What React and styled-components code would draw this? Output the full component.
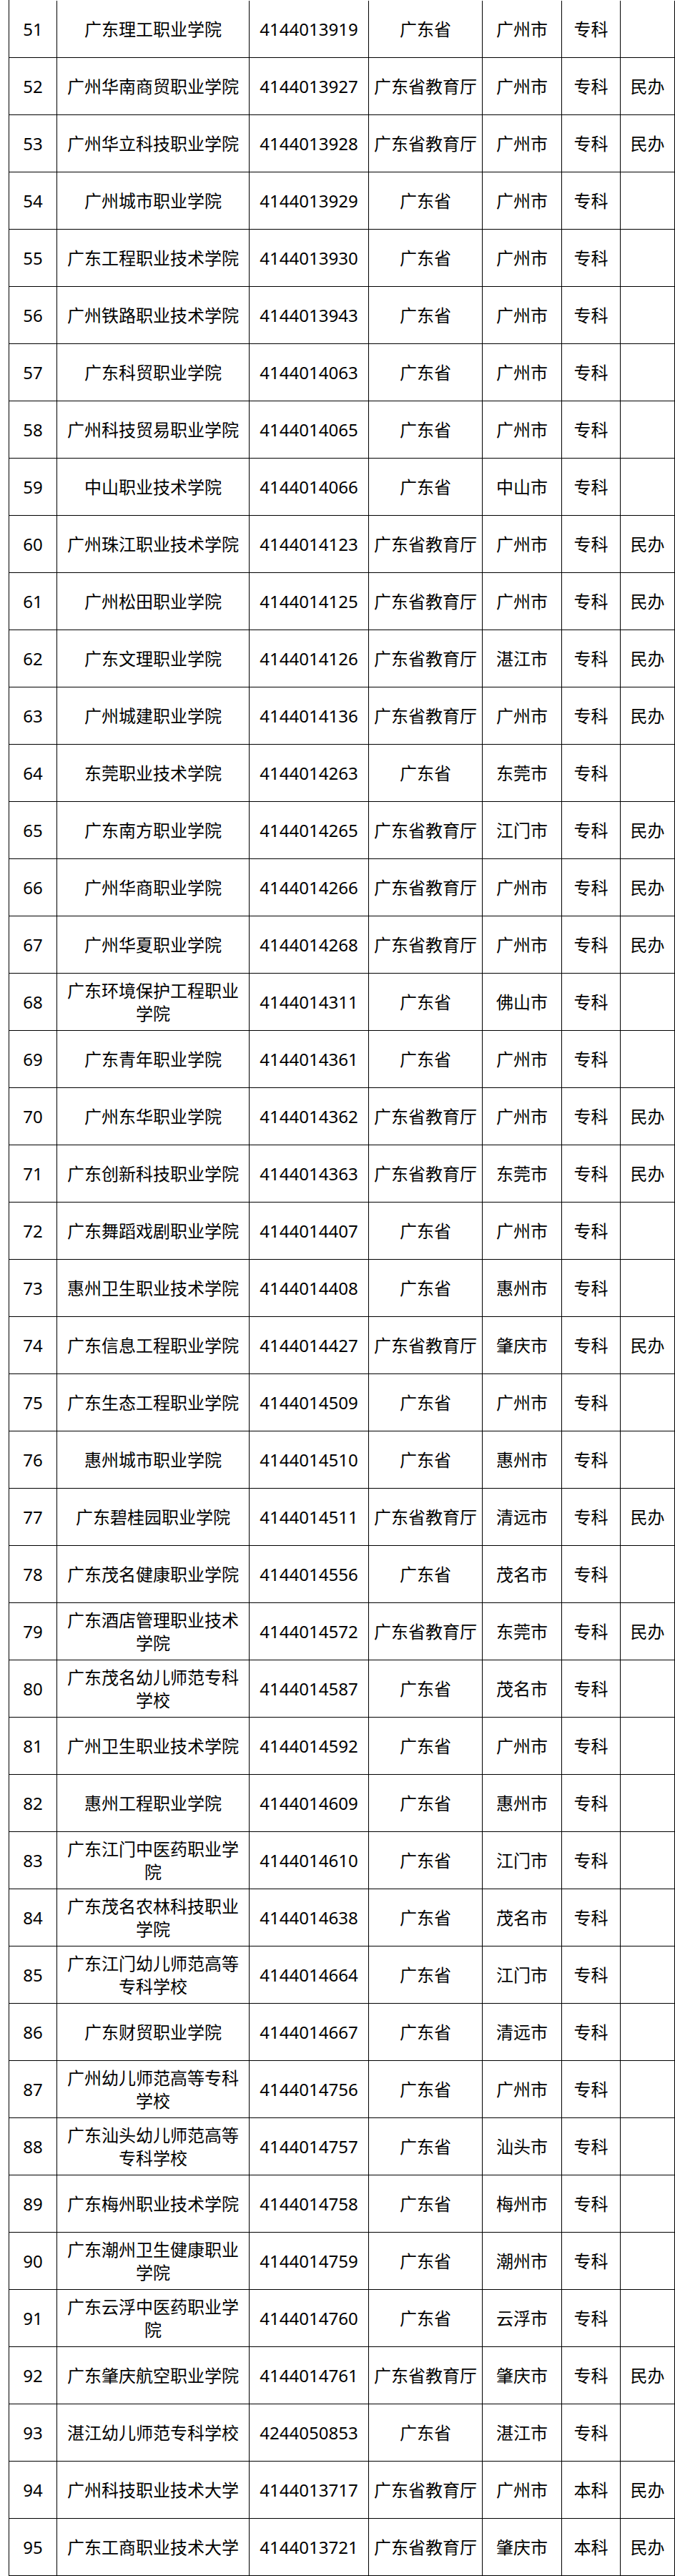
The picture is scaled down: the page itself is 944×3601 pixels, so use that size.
import React from "react";
import styled, { createGlobalStyle } from "styled-components";

const rows = [
  [51, "广东理工职业学院", "4144013919", "广东省", "广州市", "专科", ""],
  [52, "广州华南商贸职业学院", "4144013927", "广东省教育厅", "广州市", "专科", "民办"],
  [53, "广州华立科技职业学院", "4144013928", "广东省教育厅", "广州市", "专科", "民办"],
  [54, "广州城市职业学院", "4144013929", "广东省", "广州市", "专科", ""],
  [55, "广东工程职业技术学院", "4144013930", "广东省", "广州市", "专科", ""],
  [56, "广州铁路职业技术学院", "4144013943", "广东省", "广州市", "专科", ""],
  [57, "广东科贸职业学院", "4144014063", "广东省", "广州市", "专科", ""],
  [58, "广州科技贸易职业学院", "4144014065", "广东省", "广州市", "专科", ""],
  [59, "中山职业技术学院", "4144014066", "广东省", "中山市", "专科", ""],
  [60, "广州珠江职业技术学院", "4144014123", "广东省教育厅", "广州市", "专科", "民办"],
  [61, "广州松田职业学院", "4144014125", "广东省教育厅", "广州市", "专科", "民办"],
  [62, "广东文理职业学院", "4144014126", "广东省教育厅", "湛江市", "专科", "民办"],
  [63, "广州城建职业学院", "4144014136", "广东省教育厅", "广州市", "专科", "民办"],
  [64, "东莞职业技术学院", "4144014263", "广东省", "东莞市", "专科", ""],
  [65, "广东南方职业学院", "4144014265", "广东省教育厅", "江门市", "专科", "民办"],
  [66, "广州华商职业学院", "4144014266", "广东省教育厅", "广州市", "专科", "民办"],
  [67, "广州华夏职业学院", "4144014268", "广东省教育厅", "广州市", "专科", "民办"],
  [68, "广东环境保护工程职业学院", "4144014311", "广东省", "佛山市", "专科", ""],
  [69, "广东青年职业学院", "4144014361", "广东省", "广州市", "专科", ""],
  [70, "广州东华职业学院", "4144014362", "广东省教育厅", "广州市", "专科", "民办"],
  [71, "广东创新科技职业学院", "4144014363", "广东省教育厅", "东莞市", "专科", "民办"],
  [72, "广东舞蹈戏剧职业学院", "4144014407", "广东省", "广州市", "专科", ""],
  [73, "惠州卫生职业技术学院", "4144014408", "广东省", "惠州市", "专科", ""],
  [74, "广东信息工程职业学院", "4144014427", "广东省教育厅", "肇庆市", "专科", "民办"],
  [75, "广东生态工程职业学院", "4144014509", "广东省", "广州市", "专科", ""],
  [76, "惠州城市职业学院", "4144014510", "广东省", "惠州市", "专科", ""],
  [77, "广东碧桂园职业学院", "4144014511", "广东省教育厅", "清远市", "专科", "民办"],
  [78, "广东茂名健康职业学院", "4144014556", "广东省", "茂名市", "专科", ""],
  [79, "广东酒店管理职业技术学院", "4144014572", "广东省教育厅", "东莞市", "专科", "民办"],
  [80, "广东茂名幼儿师范专科学校", "4144014587", "广东省", "茂名市", "专科", ""],
  [81, "广州卫生职业技术学院", "4144014592", "广东省", "广州市", "专科", ""],
  [82, "惠州工程职业学院", "4144014609", "广东省", "惠州市", "专科", ""],
  [83, "广东江门中医药职业学院", "4144014610", "广东省", "江门市", "专科", ""],
  [84, "广东茂名农林科技职业学院", "4144014638", "广东省", "茂名市", "专科", ""],
  [85, "广东江门幼儿师范高等专科学校", "4144014664", "广东省", "江门市", "专科", ""],
  [86, "广东财贸职业学院", "4144014667", "广东省", "清远市", "专科", ""],
  [87, "广州幼儿师范高等专科学校", "4144014756", "广东省", "广州市", "专科", ""],
  [88, "广东汕头幼儿师范高等专科学校", "4144014757", "广东省", "汕头市", "专科", ""],
  [89, "广东梅州职业技术学院", "4144014758", "广东省", "梅州市", "专科", ""],
  [90, "广东潮州卫生健康职业学院", "4144014759", "广东省", "潮州市", "专科", ""],
  [91, "广东云浮中医药职业学院", "4144014760", "广东省", "云浮市", "专科", ""],
  [92, "广东肇庆航空职业学院", "4144014761", "广东省教育厅", "肇庆市", "专科", "民办"],
  [93, "湛江幼儿师范专科学校", "4244050853", "广东省", "湛江市", "专科", ""],
  [94, "广州科技职业技术大学", "4144013717", "广东省教育厅", "广州市", "本科", "民办"],
  [95, "广东工商职业技术大学", "4144013721", "广东省教育厅", "肇庆市", "本科", "民办"],
];

function App() {
  return (
    <>
      <GlobalStyle />
      <Table>
        {rows.map((r) => (
          <Row key={r[0]}>
            {r.map((v, i) => (
              <Cell key={i}>{v}</Cell>
            ))}
          </Row>
        ))}
      </Table>
    </>
  );
}

export default App;

const GlobalStyle = createGlobalStyle`
  html, body {
    margin: 0;
    padding: 0;
    background: #fff;
  }
  body {
    font-family: "Noto Sans", "Noto Sans CJK SC", sans-serif;
    color: #000;
  }
`;

const Table = styled.div`
  margin-left: 12px;
  padding-top: 1px;
  border-left: 1px solid #000;
  width: 932px;
  box-sizing: border-box;
`;

const Row = styled.div`
  display: grid;
  grid-template-columns: 67px 269px 167px 159px 111px 82px 76px;
  height: 80px;
  box-sizing: border-box;
  border-bottom: 1px solid #000;
`;

const Cell = styled.div`
  display: flex;
  align-items: center;
  justify-content: center;
  text-align: center;
  box-sizing: border-box;
  border-right: 1px solid #000;
  padding: 0 4px;
  font-size: 24px;
  line-height: 32px;
  word-break: break-all;
`;
